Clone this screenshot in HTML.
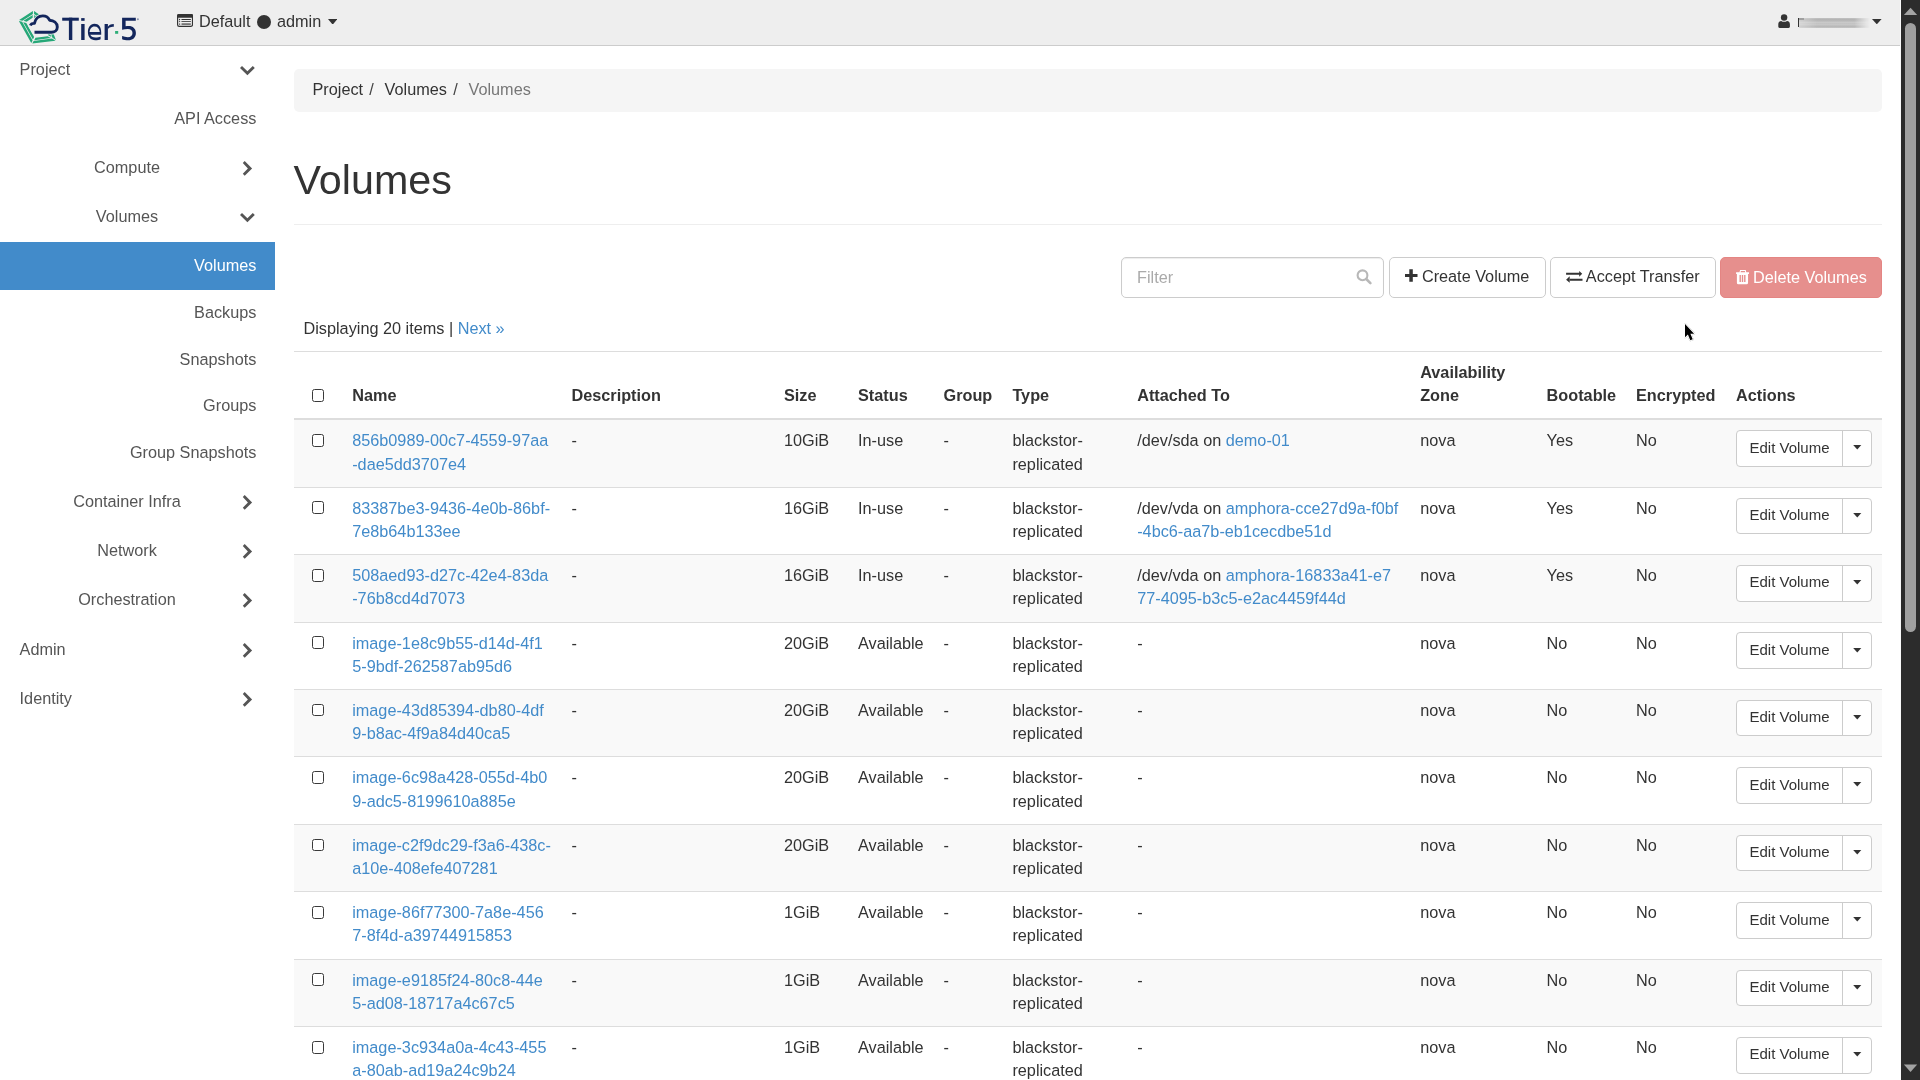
<!DOCTYPE html><html><head><meta charset="utf-8"><style>
*{box-sizing:border-box;margin:0;padding:0}
html,body{width:1920px;height:1080px;overflow:hidden;background:#fff}
body{font-family:"Liberation Sans",sans-serif;font-size:16.25px;line-height:23.21px;color:#333;position:relative}
.a{position:absolute;white-space:nowrap}
a,.lk{color:#428bca;text-decoration:none}
.hdr{position:absolute;left:0;top:0;width:1901px;height:46px;background:#eee;border-bottom:1px solid #ccc}
.nav{color:#555}
.sb{position:absolute;left:1901px;top:0;width:19px;height:1080px;background:#2c2c2c}
.bc{position:absolute;left:294px;top:69px;width:1588px;height:43px;background:#f5f5f5;border-radius:5px}
.btn{position:absolute;border:1px solid #ccc;border-radius:5px;background:#fff;height:41px}
.cb{position:absolute;width:12.6px;height:12.8px;border:1.5px solid #3a3a3a;border-radius:2.5px;background:#fff}
.th{font-weight:bold}
.rline{position:absolute;left:294px;width:1588px;height:1px;background:#ddd}
.ev{position:absolute;left:1736px;width:136px;height:36.7px;border:1px solid #ccc;border-radius:4px;background:#fff}
.ev .sp{position:absolute;left:105px;top:0;width:1px;height:100%;background:#ccc}
</style></head><body><div id="w" style="position:absolute;left:0;top:0;width:1920px;height:1080px;will-change:transform">
<div class="hdr"></div>
<svg class="a" style="left:15px;top:8px" width="130" height="40" viewBox="15 8 130 40">
<path d="M32.91 10.98 L19.09 19.92 L22.42 20.75 L32.88 13.98Z M18.84 20.91 L31.26 43.09 L32.62 40.40 L22.17 21.74Z M32.29 43.61 L55.51 40.69 L52.01 38.61 L33.65 40.92Z M55.95 39.95 L48.75 21.45 L46.71 23.08 L52.46 37.87Z M47.92 20.41 L34.08 10.99 L34.04 13.99 L45.87 22.04Z M32.70 14.93 L23.51 20.87 L26.58 21.63 L32.67 17.69Z M23.20 22.14 L32.90 39.47 L34.15 36.99 L26.26 22.90Z M34.23 40.14 L50.84 38.05 L47.63 36.14 L35.48 37.67Z M51.41 37.10 L46.20 23.73 L44.32 25.23 L48.19 35.19Z M45.13 22.38 L34.20 14.95 L34.17 17.71 L43.25 23.88Z" fill="#26a878"/>
<path d="M30.4 25.5 C31 24 32.5 23.2 34.4 23.4 C35.5 18.5 39 15.9 42.8 15.9 C46 15.9 48.4 17.5 49.6 20.2 C53.6 20.5 57.3 23 57.3 27 C57.3 30.5 54.5 32.3 51.5 32.3 L34.5 32.3 L32 28 Z" fill="#eee" stroke="#eee" stroke-width="4.6" stroke-linejoin="round"/>
<path d="M30.4 25.5 C31 24 32.5 23.2 34.4 23.4 C35.5 18.5 39 15.9 42.8 15.9 C46 15.9 48.4 17.5 49.6 20.2 C53.6 20.5 57.3 23 57.3 27 C57.3 30.5 54.5 32.3 51.5 32.3 L34.5 32.3" fill="none" stroke="#13265c" stroke-width="2.9" stroke-linejoin="round"/>
<g fill="#13265c">
<rect x="62.2" y="17.7" width="16.6" height="3"/>
<rect x="68.9" y="17.7" width="3.4" height="22.3"/>
<rect x="81.2" y="18.1" width="3.4" height="2.7"/>
<rect x="81.2" y="24" width="3.4" height="16"/>
<rect x="104.6" y="24" width="3.3" height="16"/>
<path d="M107.5 27.5 C108.5 25 110.8 24 113.8 24 L113.8 26.7 C110.5 26.7 107.9 27.5 107.9 30 Z"/>
<path d="M122.1 17.7 H135.8 V20.8 H125.6 V26.3 C126.5 26 127.5 25.9 128.6 25.9 C133 25.9 135.9 28.6 135.9 32.9 C135.9 37.5 132.6 40.2 128.1 40.2 C125.8 40.2 123.7 39.8 122.1 39.2 V36.1 C123.8 36.8 125.8 37.2 127.8 37.2 C130.8 37.2 132.5 35.6 132.5 33 C132.5 30.3 130.6 28.9 127.8 28.9 C125.8 28.9 123.8 29.3 122.1 29.8 Z"/>
</g>
<path d="M99.8 32 H89.6 C89.8 29 91.5 26.5 94.5 26.5 C97.5 26.5 99.3 28.5 99.8 32 Z M101.2 34.7 V32.5 C101.2 27.2 98.8 23.8 94.5 23.8 C90.2 23.8 87.9 27.5 87.9 32 C87.9 37 90.8 40.2 95.2 40.2 C97.4 40.2 99.2 39.8 100.6 39.2 V36.4 C99.2 37.1 97.6 37.5 95.5 37.5 C92.6 37.5 90.8 36.2 90.3 34.7 Z" fill="#13265c" fill-rule="evenodd"/>
<rect x="115.1" y="31" width="3.1" height="2.8" fill="#2eae78"/>
<circle cx="137.9" cy="19.2" r="1" fill="#8892ad"/>
</svg>
<svg class="a" style="left:176.9px;top:14px" width="16.1" height="12.9" viewBox="0 0 16.1 12.9">
<rect x="0.6" y="0.6" width="14.9" height="11.7" rx="1.6" fill="none" stroke="#333" stroke-width="1.2"/>
<path d="M1.6 0H14.5Q16.1 0 16.1 1.6V3.75H0V1.6Q0 0 1.6 0Z" fill="#333"/>
<circle cx="2.6" cy="5.5" r="0.65" fill="#333"/><circle cx="2.6" cy="7.5" r="0.65" fill="#555"/><rect x="2" y="9.4" width="1.2" height="1.5" fill="#666"/>
<rect x="4.3" y="5" width="9.7" height="1" rx="0.5" fill="#333"/><rect x="4.3" y="7" width="9.7" height="1" rx="0.5" fill="#555"/><rect x="4.5" y="9.3" width="9.3" height="1.6" fill="#666"/>
</svg>
<div class="a" style="left:199px;top:10px;color:#333">Default</div>
<div class="a" style="left:256.9px;top:15.1px;width:14px;height:14px;border-radius:50%;background:#333"></div>
<div class="a" style="left:277px;top:10px;color:#333">admin</div>
<svg class="a" style="left:327.7px;top:18.8px" width="9.4" height="5.7" viewBox="0 0 9.4 5.7"><path d="M0 0H9.4L4.7 5.7Z" fill="#333"/></svg>
<svg class="a" style="left:1778px;top:14px" width="13" height="14" viewBox="0 0 13 14">
<circle cx="6.1" cy="3.5" r="3.2" fill="#333"/><path d="M0.3 10.2 C0.3 7.8 1.8 6.9 3.2 6.9 C4 7.5 5 7.8 6.1 7.8 C7.2 7.8 8.2 7.5 9 6.9 C10.4 6.9 11.9 7.8 11.9 10.2 V12.6 C11.9 13.4 11.4 13.9 10.6 13.9 H1.6 C0.8 13.9 0.3 13.4 0.3 12.6 Z" fill="#333"/>
</svg>
<div class="a" style="left:1799.4px;top:18px;width:70.6px;height:9.6px;background:linear-gradient(180deg,#c2c2c2 0%,#b2b2b2 18%,#bdbdbd 32%,#c9c9c9 45%,#c2c2c2 58%,#c9c9c9 68%,#b6b6b6 82%,#c6c6c6 100%);-webkit-mask-image:linear-gradient(90deg,rgba(0,0,0,.55) 0%,#000 25%,#000 78%,rgba(0,0,0,0) 100%);filter:blur(0.7px)"></div>
<div class="a" style="left:1797.6px;top:18.3px;width:1.5px;height:8.5px;background:#333;filter:blur(0.2px)"></div>
<div class="a" style="left:1799px;top:18px;width:5px;height:1.6px;background:#a0a0a0;filter:blur(0.3px)"></div>
<svg class="a" style="left:1872.1px;top:19px" width="9.6" height="5.3" viewBox="0 0 9.6 5.3"><path d="M0 0H9.6L4.8 5.3Z" fill="#333"/></svg>
<div class="sb"></div>
<div class="a" style="left:1900px;top:0;width:1px;height:1080px;background:#fafafa"></div>
<svg class="a" style="left:1903px;top:7px" width="15" height="9" viewBox="0 0 15 9"><path d="M0.9 8H14.2L7.55 0.8Z" fill="#a3a3a3"/></svg>
<div class="a" style="left:1905px;top:23px;width:11px;height:609px;border-radius:5.5px;background:#a0a0a0"></div>
<svg class="a" style="left:1903px;top:1064px" width="15" height="9" viewBox="0 0 15 9"><path d="M0.9 0.6H14.2L7.55 7.9Z" fill="#a3a3a3"/></svg>
<div class="a" style="left:0;top:242px;width:275px;height:48px;background:#428bca"></div>
<div class="a" style="left:19.6px;top:57.599999999999994px;color:#555">Project</div>
<svg class="a" style="left:235px;top:65.1px" width="25" height="14" viewBox="0 0 25 14"><path d="M5.00 3.00 L7.00 1.10 L12.40 6.30 L17.80 1.10 L19.80 3.00 L12.40 10.20Z" fill="#555"/></svg>
<div class="a" style="right:1663.6px;top:106.5px;color:#555">API Access</div>
<div class="a" style="left:-23px;width:300px;text-align:center;top:155.5px;color:#555">Compute</div>
<svg class="a" style="left:235px;top:159px" width="25" height="20" viewBox="0 0 25 20"><path d="M9.70 2.00 L17.10 9.40 L9.70 16.70 L7.80 14.70 L12.90 9.40 L7.80 4.10Z" fill="#555"/></svg>
<div class="a" style="left:-23px;width:300px;text-align:center;top:204.5px;color:#555">Volumes</div>
<svg class="a" style="left:235px;top:212px" width="25" height="14" viewBox="0 0 25 14"><path d="M5.00 3.00 L7.00 1.10 L12.40 6.30 L17.80 1.10 L19.80 3.00 L12.40 10.20Z" fill="#555"/></svg>
<div class="a" style="right:1663.6px;top:253.5px;color:#fff">Volumes</div>
<div class="a" style="right:1663.6px;top:300.5px;color:#555">Backups</div>
<div class="a" style="right:1663.6px;top:347.5px;color:#555">Snapshots</div>
<div class="a" style="right:1663.6px;top:393.5px;color:#555">Groups</div>
<div class="a" style="right:1663.6px;top:440.5px;color:#555">Group Snapshots</div>
<div class="a" style="left:-23px;width:300px;text-align:center;top:489.5px;color:#555">Container Infra</div>
<svg class="a" style="left:235px;top:493px" width="25" height="20" viewBox="0 0 25 20"><path d="M9.70 2.00 L17.10 9.40 L9.70 16.70 L7.80 14.70 L12.90 9.40 L7.80 4.10Z" fill="#555"/></svg>
<div class="a" style="left:-23px;width:300px;text-align:center;top:538.5px;color:#555">Network</div>
<svg class="a" style="left:235px;top:542px" width="25" height="20" viewBox="0 0 25 20"><path d="M9.70 2.00 L17.10 9.40 L9.70 16.70 L7.80 14.70 L12.90 9.40 L7.80 4.10Z" fill="#555"/></svg>
<div class="a" style="left:-23px;width:300px;text-align:center;top:587.5px;color:#555">Orchestration</div>
<svg class="a" style="left:235px;top:591px" width="25" height="20" viewBox="0 0 25 20"><path d="M9.70 2.00 L17.10 9.40 L9.70 16.70 L7.80 14.70 L12.90 9.40 L7.80 4.10Z" fill="#555"/></svg>
<div class="a" style="left:19.6px;top:637.5px;color:#555">Admin</div>
<svg class="a" style="left:235px;top:641px" width="25" height="20" viewBox="0 0 25 20"><path d="M9.70 2.00 L17.10 9.40 L9.70 16.70 L7.80 14.70 L12.90 9.40 L7.80 4.10Z" fill="#555"/></svg>
<div class="a" style="left:19.6px;top:686.5px;color:#555">Identity</div>
<svg class="a" style="left:235px;top:690px" width="25" height="20" viewBox="0 0 25 20"><path d="M9.70 2.00 L17.10 9.40 L9.70 16.70 L7.80 14.70 L12.90 9.40 L7.80 4.10Z" fill="#555"/></svg>
<div class="bc"></div>
<div class="a" style="left:312.5px;top:78px">Project<span style="color:#444;padding:0 6.25px">/&nbsp;</span>Volumes<span style="color:#444;padding:0 6.25px">/&nbsp;</span><span style="color:#777">Volumes</span></div>
<div class="a" style="left:293.6px;top:155px;font-size:41.25px;line-height:50px">Volumes</div>
<div class="a" style="left:294px;top:224px;width:1588px;height:1px;background:#eee"></div>
<div class="btn" style="left:1121px;top:257px;width:263px;border-radius:5px;box-shadow:inset 0 1px 1px rgba(0,0,0,.075)"></div>
<div class="a" style="left:1137px;top:266.3px;color:#aaa">Filter</div>
<svg class="a" style="left:1356px;top:269px" width="17" height="17" viewBox="0 0 17 17"><circle cx="6.5" cy="6.3" r="4.9" fill="none" stroke="#b8b8b8" stroke-width="2.1"/><path d="M10.2 10 L14.4 14.2" stroke="#b8b8b8" stroke-width="2.6" stroke-linecap="round"/></svg>
<div class="btn" style="left:1389px;top:257px;width:157px"></div>
<svg class="a" style="left:1405px;top:269px" width="13" height="13" viewBox="0 0 13 13"><path d="M4.3 0.2H7.8V4.9H12.5V7.9H7.8V12.8H4.3V7.9H0V4.9H4.3Z" fill="#333"/></svg>
<div class="a" style="left:1421.9px;top:265px">Create Volume</div>
<div class="btn" style="left:1550px;top:257px;width:166px"></div>
<svg class="a" style="left:1566px;top:270px" width="17" height="14" viewBox="0 0 17 14"><path d="M0.1 2.8H13.4V4.8H0.1Z M13.2 0.9L16.2 3.8L13.2 6.7Z M3.5 8.7H16.5V10.75H3.5Z M3.7 6.2L0.1 9.7L3.7 12.8Z" fill="#333"/></svg>
<div class="a" style="left:1585.8px;top:265px">Accept Transfer</div>
<div class="btn" style="left:1720px;top:257px;width:162px;background:#e68f8d;border-color:#e48583"></div>
<svg class="a" style="left:1736px;top:270px" width="14" height="15" viewBox="0 0 14 15"><path d="M0.1 2.3H13V3.9H0.1Z M3.4 2.4L4.1 0.1H9.7L10.4 2.4Z M0.9 3.8H12.05V12.7Q12.05 14.2 10.55 14.2H2.4Q0.9 14.2 0.9 12.7Z" fill="#fff"/><path d="M4.9 1.1H8.9L9.2 2.3H4.6Z M3.5 5H4.9V11.9H3.5Z M5.8 5H7.2V11.9H5.8Z M8.1 5H9.5V11.9H8.1Z" fill="#e68f8d"/></svg>
<div class="a" style="left:1753px;top:266px;color:#fff">Delete Volumes</div>
<svg class="a" style="left:1683.2px;top:321.9px" width="14" height="21" viewBox="0 0 14 21"><path d="M2 2 V15.3 L4.9 12.5 L7.3 18.2 L9.7 17.3 L7.4 11.8 H11.1 Z" fill="#fff" stroke="#fff" stroke-width="2" stroke-linejoin="round" style="filter:drop-shadow(0.2px 0.8px 0.7px rgba(0,0,0,.45))"/><path d="M2 2 V15.3 L4.9 12.5 L7.3 18.2 L9.7 17.3 L7.4 11.8 H11.1 Z" fill="#000"/></svg>
<div class="a" style="left:303.5px;top:316.5px">Displaying 20 items | <span class="lk">Next &raquo;</span></div>
<div class="rline" style="top:351px"></div>
<div class="cb" style="left:311.5px;top:389.4px"></div>
<div class="a th" style="left:352.2px;top:383.5px">Name</div>
<div class="a th" style="left:571.5px;top:383.5px">Description</div>
<div class="a th" style="left:784px;top:383.5px">Size</div>
<div class="a th" style="left:858px;top:383.5px">Status</div>
<div class="a th" style="left:943.5px;top:383.5px">Group</div>
<div class="a th" style="left:1012.4px;top:383.5px">Type</div>
<div class="a th" style="left:1137.2px;top:383.5px">Attached To</div>
<div class="a th" style="left:1546.6px;top:383.5px">Bootable</div>
<div class="a th" style="left:1636px;top:383.5px">Encrypted</div>
<div class="a th" style="left:1736px;top:383.5px">Actions</div>
<div class="a th" style="left:1420.2px;top:360.5px;line-height:23px">Availability<br>Zone</div>
<div class="a" style="left:294px;top:418px;width:1588px;height:2px;background:#ddd"></div>
<div class="a" style="left:294px;top:420px;width:1588px;height:67px;background:#f9f9f9"></div>
<div class="rline" style="top:487px"></div>
<div class="cb" style="left:311.5px;top:433.97px"></div>
<div class="a lk" style="left:352.2px;top:429px">856b0989-00c7-4559-97aa</div>
<div class="a lk" style="left:352.2px;top:453px">-dae5dd3707e4</div>
<div class="a" style="left:571.5px;top:429px">-</div>
<div class="a" style="left:784px;top:429px">10GiB</div>
<div class="a" style="left:858px;top:429px">In-use</div>
<div class="a" style="left:943.5px;top:429px">-</div>
<div class="a" style="left:1012.4px;top:429px">blackstor-</div>
<div class="a" style="left:1012.4px;top:453px">replicated</div>
<div class="a" style="left:1137.2px;top:429px">/dev/sda on <span class="lk">demo-01</span></div>
<div class="a" style="left:1420.2px;top:429px">nova</div>
<div class="a" style="left:1546.6px;top:429px">Yes</div>
<div class="a" style="left:1636px;top:429px">No</div>
<div class="ev" style="top:430.07px"><div class="sp"></div></div>
<div class="a" style="left:1749.5px;top:435.57px;font-size:15px;line-height:23px">Edit Volume</div>
<svg class="a" style="left:1852.8px;top:445.27000000000004px" width="9" height="6" viewBox="0 0 9 6"><path d="M0.2 0H8.3L4.25 4.6Z" fill="#333"/></svg>
<div class="rline" style="top:554px"></div>
<div class="cb" style="left:311.5px;top:501.40000000000003px"></div>
<div class="a lk" style="left:352.2px;top:497px">83387be3-9436-4e0b-86bf-</div>
<div class="a lk" style="left:352.2px;top:520px">7e8b64b133ee</div>
<div class="a" style="left:571.5px;top:497px">-</div>
<div class="a" style="left:784px;top:497px">16GiB</div>
<div class="a" style="left:858px;top:497px">In-use</div>
<div class="a" style="left:943.5px;top:497px">-</div>
<div class="a" style="left:1012.4px;top:497px">blackstor-</div>
<div class="a" style="left:1012.4px;top:520px">replicated</div>
<div class="a" style="left:1137.2px;top:497px">/dev/vda on <span class="lk">amphora-cce27d9a-f0bf</span></div>
<div class="a lk" style="left:1137.2px;top:520px">-4bc6-aa7b-eb1cecdbe51d</div>
<div class="a" style="left:1420.2px;top:497px">nova</div>
<div class="a" style="left:1546.6px;top:497px">Yes</div>
<div class="a" style="left:1636px;top:497px">No</div>
<div class="ev" style="top:497.5px"><div class="sp"></div></div>
<div class="a" style="left:1749.5px;top:503.0px;font-size:15px;line-height:23px">Edit Volume</div>
<svg class="a" style="left:1852.8px;top:512.7px" width="9" height="6" viewBox="0 0 9 6"><path d="M0.2 0H8.3L4.25 4.6Z" fill="#333"/></svg>
<div class="a" style="left:294px;top:555px;width:1588px;height:67px;background:#f9f9f9"></div>
<div class="rline" style="top:622px"></div>
<div class="cb" style="left:311.5px;top:568.8299999999999px"></div>
<div class="a lk" style="left:352.2px;top:564px">508aed93-d27c-42e4-83da</div>
<div class="a lk" style="left:352.2px;top:587px">-76b8cd4d7073</div>
<div class="a" style="left:571.5px;top:564px">-</div>
<div class="a" style="left:784px;top:564px">16GiB</div>
<div class="a" style="left:858px;top:564px">In-use</div>
<div class="a" style="left:943.5px;top:564px">-</div>
<div class="a" style="left:1012.4px;top:564px">blackstor-</div>
<div class="a" style="left:1012.4px;top:587px">replicated</div>
<div class="a" style="left:1137.2px;top:564px">/dev/vda on <span class="lk">amphora-16833a41-e7</span></div>
<div class="a lk" style="left:1137.2px;top:587px">77-4095-b3c5-e2ac4459f44d</div>
<div class="a" style="left:1420.2px;top:564px">nova</div>
<div class="a" style="left:1546.6px;top:564px">Yes</div>
<div class="a" style="left:1636px;top:564px">No</div>
<div class="ev" style="top:564.93px"><div class="sp"></div></div>
<div class="a" style="left:1749.5px;top:570.43px;font-size:15px;line-height:23px">Edit Volume</div>
<svg class="a" style="left:1852.8px;top:580.13px" width="9" height="6" viewBox="0 0 9 6"><path d="M0.2 0H8.3L4.25 4.6Z" fill="#333"/></svg>
<div class="rline" style="top:689px"></div>
<div class="cb" style="left:311.5px;top:636.26px"></div>
<div class="a lk" style="left:352.2px;top:632px">image-1e8c9b55-d14d-4f1</div>
<div class="a lk" style="left:352.2px;top:655px">5-9bdf-262587ab95d6</div>
<div class="a" style="left:571.5px;top:632px">-</div>
<div class="a" style="left:784px;top:632px">20GiB</div>
<div class="a" style="left:858px;top:632px">Available</div>
<div class="a" style="left:943.5px;top:632px">-</div>
<div class="a" style="left:1012.4px;top:632px">blackstor-</div>
<div class="a" style="left:1012.4px;top:655px">replicated</div>
<div class="a" style="left:1137.2px;top:632px">-</div>
<div class="a" style="left:1420.2px;top:632px">nova</div>
<div class="a" style="left:1546.6px;top:632px">No</div>
<div class="a" style="left:1636px;top:632px">No</div>
<div class="ev" style="top:632.36px"><div class="sp"></div></div>
<div class="a" style="left:1749.5px;top:637.86px;font-size:15px;line-height:23px">Edit Volume</div>
<svg class="a" style="left:1852.8px;top:647.5600000000001px" width="9" height="6" viewBox="0 0 9 6"><path d="M0.2 0H8.3L4.25 4.6Z" fill="#333"/></svg>
<div class="a" style="left:294px;top:690px;width:1588px;height:66px;background:#f9f9f9"></div>
<div class="rline" style="top:756px"></div>
<div class="cb" style="left:311.5px;top:703.69px"></div>
<div class="a lk" style="left:352.2px;top:699px">image-43d85394-db80-4df</div>
<div class="a lk" style="left:352.2px;top:722px">9-b8ac-4f9a84d40ca5</div>
<div class="a" style="left:571.5px;top:699px">-</div>
<div class="a" style="left:784px;top:699px">20GiB</div>
<div class="a" style="left:858px;top:699px">Available</div>
<div class="a" style="left:943.5px;top:699px">-</div>
<div class="a" style="left:1012.4px;top:699px">blackstor-</div>
<div class="a" style="left:1012.4px;top:722px">replicated</div>
<div class="a" style="left:1137.2px;top:699px">-</div>
<div class="a" style="left:1420.2px;top:699px">nova</div>
<div class="a" style="left:1546.6px;top:699px">No</div>
<div class="a" style="left:1636px;top:699px">No</div>
<div class="ev" style="top:699.7900000000001px"><div class="sp"></div></div>
<div class="a" style="left:1749.5px;top:705.2900000000001px;font-size:15px;line-height:23px">Edit Volume</div>
<svg class="a" style="left:1852.8px;top:714.9900000000001px" width="9" height="6" viewBox="0 0 9 6"><path d="M0.2 0H8.3L4.25 4.6Z" fill="#333"/></svg>
<div class="rline" style="top:824px"></div>
<div class="cb" style="left:311.5px;top:771.12px"></div>
<div class="a lk" style="left:352.2px;top:766px">image-6c98a428-055d-4b0</div>
<div class="a lk" style="left:352.2px;top:790px">9-adc5-8199610a885e</div>
<div class="a" style="left:571.5px;top:766px">-</div>
<div class="a" style="left:784px;top:766px">20GiB</div>
<div class="a" style="left:858px;top:766px">Available</div>
<div class="a" style="left:943.5px;top:766px">-</div>
<div class="a" style="left:1012.4px;top:766px">blackstor-</div>
<div class="a" style="left:1012.4px;top:790px">replicated</div>
<div class="a" style="left:1137.2px;top:766px">-</div>
<div class="a" style="left:1420.2px;top:766px">nova</div>
<div class="a" style="left:1546.6px;top:766px">No</div>
<div class="a" style="left:1636px;top:766px">No</div>
<div class="ev" style="top:767.22px"><div class="sp"></div></div>
<div class="a" style="left:1749.5px;top:772.72px;font-size:15px;line-height:23px">Edit Volume</div>
<svg class="a" style="left:1852.8px;top:782.4200000000001px" width="9" height="6" viewBox="0 0 9 6"><path d="M0.2 0H8.3L4.25 4.6Z" fill="#333"/></svg>
<div class="a" style="left:294px;top:825px;width:1588px;height:66px;background:#f9f9f9"></div>
<div class="rline" style="top:891px"></div>
<div class="cb" style="left:311.5px;top:838.55px"></div>
<div class="a lk" style="left:352.2px;top:834px">image-c2f9dc29-f3a6-438c-</div>
<div class="a lk" style="left:352.2px;top:857px">a10e-408efe407281</div>
<div class="a" style="left:571.5px;top:834px">-</div>
<div class="a" style="left:784px;top:834px">20GiB</div>
<div class="a" style="left:858px;top:834px">Available</div>
<div class="a" style="left:943.5px;top:834px">-</div>
<div class="a" style="left:1012.4px;top:834px">blackstor-</div>
<div class="a" style="left:1012.4px;top:857px">replicated</div>
<div class="a" style="left:1137.2px;top:834px">-</div>
<div class="a" style="left:1420.2px;top:834px">nova</div>
<div class="a" style="left:1546.6px;top:834px">No</div>
<div class="a" style="left:1636px;top:834px">No</div>
<div class="ev" style="top:834.65px"><div class="sp"></div></div>
<div class="a" style="left:1749.5px;top:840.15px;font-size:15px;line-height:23px">Edit Volume</div>
<svg class="a" style="left:1852.8px;top:849.85px" width="9" height="6" viewBox="0 0 9 6"><path d="M0.2 0H8.3L4.25 4.6Z" fill="#333"/></svg>
<div class="rline" style="top:959px"></div>
<div class="cb" style="left:311.5px;top:905.98px"></div>
<div class="a lk" style="left:352.2px;top:901px">image-86f77300-7a8e-456</div>
<div class="a lk" style="left:352.2px;top:924px">7-8f4d-a39744915853</div>
<div class="a" style="left:571.5px;top:901px">-</div>
<div class="a" style="left:784px;top:901px">1GiB</div>
<div class="a" style="left:858px;top:901px">Available</div>
<div class="a" style="left:943.5px;top:901px">-</div>
<div class="a" style="left:1012.4px;top:901px">blackstor-</div>
<div class="a" style="left:1012.4px;top:924px">replicated</div>
<div class="a" style="left:1137.2px;top:901px">-</div>
<div class="a" style="left:1420.2px;top:901px">nova</div>
<div class="a" style="left:1546.6px;top:901px">No</div>
<div class="a" style="left:1636px;top:901px">No</div>
<div class="ev" style="top:902.08px"><div class="sp"></div></div>
<div class="a" style="left:1749.5px;top:907.58px;font-size:15px;line-height:23px">Edit Volume</div>
<svg class="a" style="left:1852.8px;top:917.2800000000001px" width="9" height="6" viewBox="0 0 9 6"><path d="M0.2 0H8.3L4.25 4.6Z" fill="#333"/></svg>
<div class="a" style="left:294px;top:960px;width:1588px;height:66px;background:#f9f9f9"></div>
<div class="rline" style="top:1026px"></div>
<div class="cb" style="left:311.5px;top:973.4100000000001px"></div>
<div class="a lk" style="left:352.2px;top:969px">image-e9185f24-80c8-44e</div>
<div class="a lk" style="left:352.2px;top:992px">5-ad08-18717a4c67c5</div>
<div class="a" style="left:571.5px;top:969px">-</div>
<div class="a" style="left:784px;top:969px">1GiB</div>
<div class="a" style="left:858px;top:969px">Available</div>
<div class="a" style="left:943.5px;top:969px">-</div>
<div class="a" style="left:1012.4px;top:969px">blackstor-</div>
<div class="a" style="left:1012.4px;top:992px">replicated</div>
<div class="a" style="left:1137.2px;top:969px">-</div>
<div class="a" style="left:1420.2px;top:969px">nova</div>
<div class="a" style="left:1546.6px;top:969px">No</div>
<div class="a" style="left:1636px;top:969px">No</div>
<div class="ev" style="top:969.5100000000001px"><div class="sp"></div></div>
<div class="a" style="left:1749.5px;top:975.0100000000001px;font-size:15px;line-height:23px">Edit Volume</div>
<svg class="a" style="left:1852.8px;top:984.7100000000002px" width="9" height="6" viewBox="0 0 9 6"><path d="M0.2 0H8.3L4.25 4.6Z" fill="#333"/></svg>
<div class="rline" style="top:1093px"></div>
<div class="cb" style="left:311.5px;top:1040.84px"></div>
<div class="a lk" style="left:352.2px;top:1036px">image-3c934a0a-4c43-455</div>
<div class="a lk" style="left:352.2px;top:1059px">a-80ab-ad19a24c9b24</div>
<div class="a" style="left:571.5px;top:1036px">-</div>
<div class="a" style="left:784px;top:1036px">1GiB</div>
<div class="a" style="left:858px;top:1036px">Available</div>
<div class="a" style="left:943.5px;top:1036px">-</div>
<div class="a" style="left:1012.4px;top:1036px">blackstor-</div>
<div class="a" style="left:1012.4px;top:1059px">replicated</div>
<div class="a" style="left:1137.2px;top:1036px">-</div>
<div class="a" style="left:1420.2px;top:1036px">nova</div>
<div class="a" style="left:1546.6px;top:1036px">No</div>
<div class="a" style="left:1636px;top:1036px">No</div>
<div class="ev" style="top:1036.94px"><div class="sp"></div></div>
<div class="a" style="left:1749.5px;top:1042.44px;font-size:15px;line-height:23px">Edit Volume</div>
<svg class="a" style="left:1852.8px;top:1052.1399999999999px" width="9" height="6" viewBox="0 0 9 6"><path d="M0.2 0H8.3L4.25 4.6Z" fill="#333"/></svg>
</div></body></html>
